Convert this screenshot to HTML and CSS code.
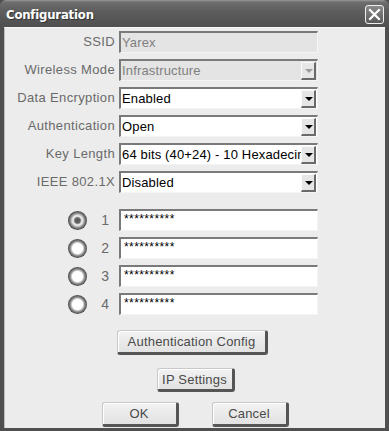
FILE: index.html
```html
<!DOCTYPE html>
<html lang="en">
<head>
  <meta charset="UTF-8">
  <title>Configuration</title>
  <link rel="stylesheet" href="styles.css">
</head>
<body>
  <div class="window">
    <div class="titlebar">
      <span class="title">Configuration</span>
      <span class="close">
        <svg width="13" height="13" viewBox="0 0 13 13"><path d="M2 2 L11 11 M11 2 L2 11" stroke="#fff" stroke-width="2.2" stroke-linecap="square"/></svg>
      </span>
    </div>
    <div class="content">
      <div class="form">
        <label>SSID</label>
        <div class="field disabled"><span class="value">Yarex</span></div>

        <label>Wireless Mode</label>
        <div class="field disabled"><span class="value">Infrastructure</span><span class="arrow"></span></div>

        <label>Data Encryption</label>
        <div class="field"><span class="value">Enabled</span><span class="arrow"></span></div>

        <label>Authentication</label>
        <div class="field"><span class="value">Open</span><span class="arrow"></span></div>

        <label>Key Length</label>
        <div class="field"><span class="value">64 bits (40+24) - 10 Hexadecimal digits</span><span class="arrow"></span></div>

        <label>IEEE 802.1X</label>
        <div class="field"><span class="value">Disabled</span><span class="arrow"></span></div>
      </div>

      <div class="form keys">
        <div class="key-label"><span class="radio checked"></span><span class="num">1</span></div>
        <div class="field key"><span class="value">**********</span></div>

        <div class="key-label"><span class="radio"></span><span class="num">2</span></div>
        <div class="field key"><span class="value">**********</span></div>

        <div class="key-label"><span class="radio"></span><span class="num">3</span></div>
        <div class="field key"><span class="value">**********</span></div>

        <div class="key-label"><span class="radio"></span><span class="num">4</span></div>
        <div class="field key"><span class="value">**********</span></div>
      </div>

      <div class="actions">
        <button class="btn btn-auth">Authentication Config</button>
        <button class="btn btn-ip">IP Settings</button>
        <div class="btn-row">
          <button class="btn btn-small">OK</button>
          <button class="btn btn-small">Cancel</button>
        </div>
      </div>
    </div>
  </div>
</body>
</html>
```

FILE: styles.css
```css
* {
  margin: 0;
  padding: 0;
  box-sizing: border-box;
}

body {
  width: 389px;
  height: 431px;
  overflow: hidden;
  background: #ececec;
  font-family: 'Liberation Sans', Arial, sans-serif;
  font-size: 13px;
}

.window {
  width: 389px;
  height: 431px;
  display: flex;
  flex-direction: column;
  background: #4f4f4f;
  padding: 0 4px 3px 4px;
}

.titlebar {
  height: 27px;
  margin: 0 -4px;
  padding: 0 5px 0 6px;
  display: flex;
  align-items: center;
  justify-content: space-between;
  background: linear-gradient(#9a9a9a 0, #6e6e6e 2px, #5e5e5e 40%, #545454 80%, #4f4f4f 100%);
  border-radius: 6px 6px 0 0;
}

.title {
  color: #fff;
  font-family: 'DejaVu Sans Condensed', 'DejaVu Sans', sans-serif;
  font-weight: bold;
  font-size: 13px;
  letter-spacing: -0.2px;
  text-shadow: 1px 1px 0 #333;
  margin-top: 2px;
}

.close {
  width: 19px;
  height: 19px;
  margin-top: 2px;
  border: 1px solid #f0f0f0;
  border-radius: 3px;
  background: linear-gradient(#8a8a8a, #5a5a5a);
  display: flex;
  align-items: center;
  justify-content: center;
}

.content {
  flex: 1;
  background: #ececec;
  border-left: 1px solid #bdbdbd;
  border-top: 1px solid #f8f8f8;
  padding-top: 3px;
}

.form {
  display: grid;
  grid-template-columns: 110px 199px;
  column-gap: 4px;
  row-gap: 6px;
}

.form label {
  color: #6a6a6a;
  text-align: right;
  line-height: 22px;
  letter-spacing: 0.35px;
}

.field {
  height: 22px;
  background: #fff;
  border-top: 2px solid #7a7a7a;
  border-left: 2px solid #7a7a7a;
  border-right: 1px solid #f4f4f4;
  border-bottom: 1px solid #f4f4f4;
  display: flex;
  align-items: center;
  overflow: hidden;
}

.field .value {
  flex: 1;
  padding-left: 1px;
  white-space: nowrap;
  overflow: hidden;
  color: #000;
  letter-spacing: 0.15px;
}

.field.disabled {
  background: #e4e4e4;
}

.field.disabled .value {
  color: #808080;
}

.arrow {
  width: 15px;
  height: 18px;
  margin-right: 1px;
  flex-shrink: 0;
  background: #e6e6e6;
  border-top: 1px solid #fafafa;
  border-left: 1px solid #fafafa;
  border-right: 2px solid #6a6a6a;
  border-bottom: 2px solid #6a6a6a;
  position: relative;
}

.arrow::after {
  content: "";
  position: absolute;
  left: 3px;
  top: 6px;
  border-left: 4px solid transparent;
  border-right: 4px solid transparent;
  border-top: 4px solid #000;
}

.field.disabled .arrow::after {
  border-top-color: #9a9a9a;
}

.keys {
  margin-top: 16px;
}

.key-label {
  display: flex;
  align-items: center;
  justify-content: flex-end;
  gap: 14px;
  padding-right: 6px;
}

.num {
  color: #6a6a6a;
  font-size: 14px;
}

.radio {
  width: 19px;
  height: 19px;
  border-radius: 50%;
  background: radial-gradient(circle at 50% 50%, #fff 0, #fff 38%, #9a9a9a 52%, #3a3a3a 72%, #5a5a5a 100%);
}

.radio.checked {
  background: radial-gradient(circle at 50% 50%, #555 0, #666 20%, #eee 32%, #ddd 40%, #8a8a8a 54%, #3a3a3a 72%, #5a5a5a 100%);
}

.field.key {
  align-items: flex-start;
}

.field.key .value {
  font-size: 12px;
  padding-left: 3px;
  padding-top: 1px;
  letter-spacing: 0.4px;
}

.actions {
  display: flex;
  flex-direction: column;
  align-items: center;
  padding-right: 5px;
}

.btn {
  font-family: 'Liberation Sans', Arial, sans-serif;
  font-size: 13px;
  color: #4a4a4a;
  letter-spacing: 0.2px;
  background: linear-gradient(#f2f2f2, #e2e2e2);
  border: 1px solid #c8c8c8;
  border-right: 3px solid #555;
  border-bottom: 3px solid #555;
  border-radius: 3px;
  box-shadow: inset 1px 1px 0 #fff;
}

.btn-auth {
  width: 151px;
  height: 25px;
  margin-top: 15px;
}

.btn-ip {
  width: 78px;
  height: 24px;
  margin-top: 13px;
  margin-left: 6px;
}

.btn-row {
  display: flex;
  gap: 33px;
  margin-top: 10px;
  margin-left: 5px;
}

.btn-small {
  width: 77px;
  height: 25px;
}
```
